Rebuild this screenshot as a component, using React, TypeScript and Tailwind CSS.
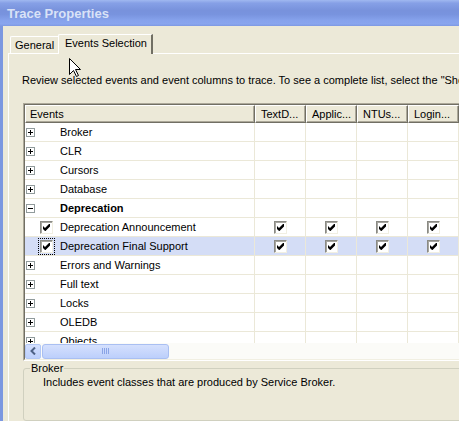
import React from 'react';

type Row = { name: string; kind: 'cat' | 'open' | 'event'; selected?: boolean };

const rows: Row[] = [
  { name: 'Broker', kind: 'cat' },
  { name: 'CLR', kind: 'cat' },
  { name: 'Cursors', kind: 'cat' },
  { name: 'Database', kind: 'cat' },
  { name: 'Deprecation', kind: 'open' },
  { name: 'Deprecation Announcement', kind: 'event' },
  { name: 'Deprecation Final Support', kind: 'event', selected: true },
  { name: 'Errors and Warnings', kind: 'cat' },
  { name: 'Full text', kind: 'cat' },
  { name: 'Locks', kind: 'cat' },
  { name: 'OLEDB', kind: 'cat' },
  { name: 'Objects', kind: 'cat' },
];

const columns = ['TextD...', 'Applic...', 'NTUs...', 'Login...'];

function Expander({ open }: { open?: boolean }) {
  return (
    <svg width="9" height="9" viewBox="0 0 9 9" className="block">
      <rect x="0.5" y="0.5" width="8" height="8" fill="#fff" stroke="#919b9c" />
      <path d="M2 4.5h5" stroke="#000" />
      {!open && <path d="M4.5 2v5" stroke="#000" />}
    </svg>
  );
}

function CheckBox({ focused }: { focused?: boolean }) {
  return (
    <span
      className={`flex h-[13px] w-[13px] items-center justify-center border border-t-[#8a8a84] border-l-[#8a8a84] border-b-[#f1efe2] border-r-[#f1efe2] bg-white shadow-[inset_1px_1px_0_#a7a6a0] ${
        focused ? 'outline outline-1 outline-dotted outline-black outline-offset-1' : ''
      }`}
    >
      <svg width="7" height="7" viewBox="0 0 7 7" className="block">
        <path d="M0 2L2 4L6 0L7 0L7 2.5L2.5 7L2 7L0 5Z" fill="#000" />
      </svg>
    </span>
  );
}

function HeaderCell({ label, w, pl }: { label: string; w: string; pl: string }) {
  return (
    <div
      className={`${w} ${pl} flex h-[18px] shrink-0 items-center border-t border-l border-white border-r border-b border-r-[#716f64] border-b-[#716f64] shadow-[inset_-1px_-1px_0_#aca899] bg-[#ece9d8]`}
    >
      {label}
    </div>
  );
}

export default function App() {
  return (
    <div className="relative h-[421px] w-[459px] overflow-hidden bg-[#ece9d8] font-['Liberation_Sans',Arial,sans-serif] text-[11px] leading-[13px] text-black">
      {/* Title bar */}
      <div className="flex h-[26px] items-center pl-[7px] bg-[linear-gradient(to_bottom,#a0b8f0_0%,#86a0e6_12%,#7892dc_40%,#7893de_55%,#86a2ec_78%,#89a5ee_92%,#7d98e2_100%)]">
        <span className="pt-[2px] text-[13px] font-bold leading-[16px] text-[#d9e2f7]">Trace Properties</span>
      </div>

      <div className="flex h-[395px]">
        <div className="w-[3px] shrink-0 bg-[#7b97e0]" />
        <div className="flex min-w-0 flex-1 flex-col">
          {/* Tabs */}
          <div className="mt-[8px] flex h-[19px] items-end pl-[7px]">
            <div className="h-[17px] w-[48px] shrink-0 rounded-tl-[2px] border-t border-l border-white pl-[4px] pt-[2px]">
              General
            </div>
            <div className="relative z-10 -mb-px h-[20px] w-[95px] shrink-0 rounded-tl-[2px] border-t border-l border-white border-r-2 border-r-[#716f64] bg-[#ece9d8] pl-[6px] pt-[2px]">
              Events Selection
            </div>
          </div>

          {/* Tab panel */}
          <div className="ml-[5px] flex w-[560px] flex-1 flex-col border-t border-l border-white pl-[13px] pt-[20px]">
            <div className="whitespace-nowrap">
              Review selected events and event columns to trace. To see a complete list, select the "Show all events" and "Show all columns" options.
            </div>

            {/* Grid */}
            <div className="ml-[1px] mt-[16px] w-[520px] border border-[#aca899] border-b-white border-r-white">
              <div className="border-t border-l border-[#716f64] border-b border-b-[#f1efe2]">
                <div className="flex">
                  <HeaderCell label="Events" w="w-[230px]" pl="pl-[4px]" />
                  {columns.map((c) => (
                    <HeaderCell key={c} label={c} w="w-[51px]" pl="pl-[5px]" />
                  ))}
                  <HeaderCell label="" w="w-[60px]" pl="pl-[5px]" />
                </div>

                <div className="h-[220px] overflow-hidden bg-white">
                  {rows.map((r) => (
                    <div key={r.name} className={`flex h-[19px] ${r.selected ? 'bg-[#d4ddf6]' : ''}`}>
                      <div className="flex w-[230px] shrink-0 items-center border-r border-b border-[#ebe8d8]">
                        <div className="w-[15px] shrink-0 pl-[1px]">
                          {r.kind !== 'event' && <Expander open={r.kind === 'open'} />}
                        </div>
                        <div className="w-[20px] shrink-0">
                          {r.kind === 'event' && <CheckBox focused={r.selected} />}
                        </div>
                        <span className={`whitespace-nowrap ${r.kind === 'open' ? 'font-bold' : ''}`}>{r.name}</span>
                      </div>
                      {columns.map((c) => (
                        <div
                          key={c}
                          className="flex w-[51px] shrink-0 items-center justify-center border-r border-b border-[#ebe8d8]"
                        >
                          {r.kind === 'event' && <CheckBox />}
                        </div>
                      ))}
                      <div className="w-[60px] shrink-0 border-b border-[#ebe8d8]" />
                    </div>
                  ))}
                </div>

                {/* Horizontal scrollbar */}
                <div className="flex h-[16px] items-center bg-[#fbfbf8]">
                  <div className="flex h-[15px] w-[16px] items-center justify-center rounded-[2px] border border-[#b3c8f5] bg-[linear-gradient(to_bottom,#d3dffd,#bdd0fb)]">
                    <svg width="6" height="8" viewBox="0 0 6 8" className="block">
                      <path d="M5 0.5L1.5 4L5 7.5" fill="none" stroke="#4d6185" strokeWidth="2" />
                    </svg>
                  </div>
                  <div className="ml-[1px] flex h-[15px] w-[127px] items-center justify-center gap-[1px] rounded-[3px] border border-[#a9bff2] bg-[linear-gradient(to_bottom,#d5e0fd,#bccffb)]">
                    <span className="h-[6px] w-px bg-[#8aa4e6]" />
                    <span className="h-[6px] w-px bg-[#8aa4e6]" />
                    <span className="h-[6px] w-px bg-[#8aa4e6]" />
                    <span className="h-[6px] w-px bg-[#8aa4e6]" />
                  </div>
                </div>
              </div>
            </div>

            {/* Description group */}
            <fieldset className="ml-[1px] mt-[1px] h-[59px] w-[520px] rounded-[3px] border border-[#d0d0bf]">
              <legend className="ml-[6px] px-[1px] leading-[13px]">Broker</legend>
              <div className="pl-[19px] pt-[1px] whitespace-nowrap">
                Includes event classes that are produced by Service Broker.
              </div>
            </fieldset>
          </div>
        </div>
      </div>

      {/* Mouse pointer */}
      <svg width="13" height="20" viewBox="0 0 13 20" className="absolute left-[69px] top-[58px]">
        <path
          d="M0.5 0.5L0.5 16.5L4.5 12.5L7.5 18.5L9.5 17.5L6.5 11.5L11.5 11.5Z"
          fill="#fff"
          stroke="#000"
          strokeLinejoin="miter"
        />
      </svg>
    </div>
  );
}
